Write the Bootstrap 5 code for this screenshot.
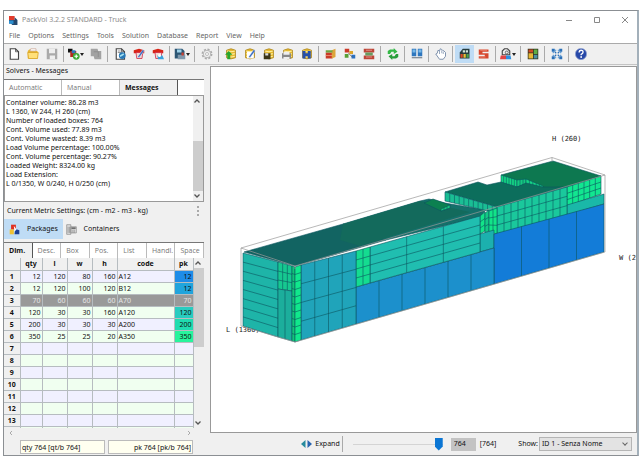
<!DOCTYPE html>
<html lang="en">
<head>
<meta charset="utf-8">
<meta name="viewport" content="width=device-width, initial-scale=1">
<title>PackVol 3.2.2 STANDARD - Truck</title>
<link href="https://cdn.jsdelivr.net/npm/bootstrap@5.3.0/dist/css/bootstrap.min.css" rel="stylesheet">
<style>
  body { font-family: "Noto Sans", "Open Sans", sans-serif; font-size: 7px; line-height: 12px; color: #111; background: #fff; padding: 10px 1px 3px 3px; }
  button, input, select, textarea { font: inherit; color: inherit; border-radius: 0; }
  .app-win { border: 1px solid #8b8f93; border-right: 2px solid #a3b0ba; background: #f0f0f0; }
  .titlebar { height: 18px; background: #fff; color: #8c8c8c; padding: 0 8px 0 5px; }
  .menubar { height: 14px; background: #fff; padding-left: 5px; gap: 8px; }
  .menubar a { color: #666; text-decoration: none; }
  .tools { height: 22px; border-top: 1px solid #aaa; border-bottom: 1px solid #c4c4c4; }
  .tool { width: 19px; height: 18px; padding: 0; border: 0; background: none; }
  .tool svg { width: 12px; height: 12px; }
  .tool.has-menu { width: 20px; }
  .tool.has-menu::after { content: ""; border: 2px solid transparent; border-top: 3px solid #222; border-bottom: 0; }
  .tool.is-on, .mode.is-on { background: #bfdcf5; }
  .tool-sep { width: 1px; height: 16px; margin: 0 2px; background: #aaa; }
  .side { width: 206px; }
  .side-inner { width: 200px; }
  .side-title { height: 14px; padding: 0 2px; }
  .settings-line { height: 17px; padding: 0 3px; }
  .modes { margin-bottom: 3px; }
  .tabline { border-top: 1px solid #777; background: #fff; }
  .tabline button { border: 0; border-right: 1px solid #bbb; background: #fff; color: #777; text-align: left; padding: 0 0 0 5px; font-family: "Open Sans", sans-serif; height: 15px; }
  .tabline button.is-on { color: #111; font-weight: 700; background: #f0f0f0; border-right-color: #555; }
  .msg-tabs button { width: 58px; }
  .dim-tabs button { width: 29px; }
  .log { height: 107px; border: 1px solid #999; background: #fff; }
  .log textarea { border: 0; outline: 0; resize: none; overflow: hidden; line-height: 9px; padding: 2px 1px 0 1px; background: #fff; }
  .sbar { width: 10px; background: #f0f0f0; }
  .sbar svg { width: 8px; height: 10px; }
  .mode { border: 0; background: none; height: 20px; width: 59px; padding: 0; gap: 7px; }
  .mode svg { width: 11px; height: 11px; }
  .gridbox { height: 170px; overflow: hidden; }
  .pk { table-layout: fixed; border-collapse: collapse; width: 189px; line-height: 11px; }
  .pk th, .pk td { height: 12px; padding: 0 1px; border-right: 1px solid #b6bcc0; border-bottom: 1px solid #b6bcc0; white-space: nowrap; }
  .pk th { background: #f0f0f0; text-align: center; font-weight: 700; }
  .pk td { text-align: right; background: #f0f0ff; }
  .pk tr:nth-child(even) td { background: #f0fff0; }
  .pk td:nth-child(6) { text-align: left; }
  .pk tr.sel td { background: #999; color: #e6e6e6; }
  .pk tr .c1 { background: #1e8ce8 !important; }
  .pk tr .c2 { background: #20a4dc !important; }
  .pk tr .c4 { background: #28ccc0 !important; }
  .pk tr .c5 { background: #20dcb0 !important; }
  .pk tr .c6 { background: #28f49c !important; }
  .sums { margin: 2px 11px 0 16px; gap: 3px; }
  .sum { height: 14px; border: 1px solid #bbb; background: #fffff0; padding: 0 1px; min-width: 0; }
  .view3d { background: #fff; border: 1px solid #999; margin-top: 1px; }
  .view3d svg { display: block; width: 100%; height: auto; }
  .view3d text { font: 7px "DejaVu Sans Mono", monospace; fill: #222; }
  .statusbar { height: 22px; padding-right: 5px; }
  .expand { border: 0; background: none; padding: 0; gap: 3px; }
  .slide { appearance: none; -webkit-appearance: none; width: 90px; height: 14px; margin: 0 8px; background: linear-gradient(#d4d4d4, #d4d4d4) center / 100% 1px no-repeat; }
  .slide::-webkit-slider-thumb { -webkit-appearance: none; width: 8px; height: 13px; background: #0b76d4; clip-path: polygon(0 0, 100% 0, 100% 70%, 50% 100%, 0 70%); }
  .count { width: 25px; height: 13px; border: 0; background: #c3c3c3; padding: 0 0 2px 3px; }
  .total { margin: 0 22px 0 4px; }
  .shown { width: 93px; height: 14px; border: 1px solid #b5b5b5; padding: 0 2px; appearance: none; -webkit-appearance: none; background: #e3e3e3; }
  .shown-wrap { margin-left: 1px; }
  .shown-wrap::after { content: ""; position: absolute; right: 5px; top: 4px; width: 4px; height: 4px; border: solid #666; border-width: 0 1px 1px 0; transform: rotate(45deg); }
</style>
</head>
<body>
<svg width="0" height="0" class="position-absolute" aria-hidden="true">
  <defs>
    <symbol id="db" viewBox="0 0 16 16"><path d="M2 3q6-4 12 0v10q-6 3-12 0z" fill="#e6b92e" stroke="#a98420"/><path d="M3 4q5 2 10 0M3 7.500q5 2 10 0M3 11q5 2 10 0" fill="none" stroke="#fff0a0" stroke-width="1.500"/></symbol>
    <symbol id="page" viewBox="0 0 16 16"><path d="M3 1h7l4 4v10H3z" fill="#fff" stroke="#444" stroke-width="1.500"/><path d="M10 1v4h4" fill="none" stroke="#444"/></symbol>
    <symbol id="truck" viewBox="0 0 16 16"><path d="M1 3l7-2 7 2v4H1z" fill="#d82418"/><path d="M4 6h9l-1 8H5z" fill="#f4d9d0" stroke="#c24"/></symbol>
    <symbol id="up" viewBox="0 0 8 10"><path d="M1.500 6.500L4 4l2.500 2.500" fill="none" stroke="#555" stroke-width="1.300"/></symbol>
    <symbol id="down" viewBox="0 0 8 10"><path d="M1.500 3.500L4 6l2.500-2.500" fill="none" stroke="#555" stroke-width="1.300"/></symbol>
  </defs>
</svg>

<main class="app-win">
  <header class="titlebar d-flex align-items-center">
    <svg width="9" height="9" viewBox="0 0 16 16"><path d="M0 0h10v8H0z" fill="#e13b2c"/><path d="M10 2l5 5v9H6L0 10V7h10z" fill="#24486e"/><path d="M0 8h8v6H0z" fill="#2d8fd0"/></svg>
    <span class="ms-1">PackVol 3.2.2 STANDARD - Truck</span>
    <svg class="ms-auto" width="64" height="8" viewBox="0 0 64 8" fill="none" stroke="#888"><path d="M1 4.500h6M29.500 1.500h5v5h-5zM57 1l6 6M63 1l-6 6"/></svg>
  </header>
  <nav class="menubar d-flex align-items-center" aria-label="Main menu">
    <a href="#">File</a><a href="#">Options</a><a href="#">Settings</a><a href="#">Tools</a><a href="#">Solution</a><a href="#">Database</a><a href="#">Report</a><a href="#">View</a><a href="#">Help</a>
  </nav>
  <div class="tools d-flex align-items-center" role="toolbar" aria-label="Tools" id="tools"></div>

  <div class="d-flex">
    <aside class="side flex-shrink-0">
      <div class="side-inner">
        <div class="side-title">Solvers - Messages</div>
        <div class="tabline msg-tabs d-flex"><button type="button">Automatic</button><button type="button">Manual</button><button type="button" class="is-on">Messages</button></div>
        <div class="log d-flex">
          <textarea class="flex-grow-1" readonly aria-label="Messages">Container volume: 86.28 m3
L 1360, W 244, H 260 (cm)
Number of loaded boxes: 764
Cont. Volume used: 77.89 m3
Cont. Volume wasted: 8.39 m3
Load Volume percentage: 100.00%
Cont. Volume percentage: 90.27%
Loaded Weight: 8324.00 kg
Load Extension:
L 0/1350, W 0/240, H 0/250 (cm)</textarea>
          <div class="sbar d-flex flex-column"><svg><use href="#up"/></svg><div style="flex:35"></div><div style="flex:50;background:#cdcdcd"></div><svg><use href="#down"/></svg></div>
        </div>
        <div class="settings-line d-flex align-items-center justify-content-between"><span class="text-nowrap">Current Metric Settings: (cm - m2 - m3 - kg)</span><svg width="4" height="10" viewBox="0 0 4 10" fill="#aaa"><path d="M0 0h2v2H0zM0 4h2v2H0zM0 8h2v2H0z"/></svg></div>
        <div class="modes d-flex">
          <button type="button" class="mode is-on d-flex align-items-center justify-content-center"><svg viewBox="0 0 16 16"><path d="M3 1h7v7H3z" fill="#e03020"/><path d="M9 7l6 2v6H8z" fill="#1c3f96"/><path d="M1 8h6v7H1z" fill="#f0c030"/><path d="M7 3l4 5-3 3z" fill="#fff"/></svg>Packages</button>
          <button type="button" class="mode d-flex align-items-center justify-content-center"><svg viewBox="0 0 16 16"><path d="M1 1h6v14H1zM7 4h8v9H7z" fill="#ddd" stroke="#888"/><path d="M8 5h6v2H8z" fill="#555"/><path d="M3 4v9M5 4v9M10 8v5M12 8v5" stroke="#888"/></svg>Containers</button>
        </div>
        <div class="tabline dim-tabs d-flex overflow-hidden"><button type="button" class="is-on">Dim.</button><button type="button">Desc.</button><button type="button">Box</button><button type="button">Pos.</button><button type="button">List</button><button type="button">Handl.</button><button type="button">Space</button></div>
        <div class="gridbox d-flex">
          <table class="pk">
            <colgroup><col style="width:16px"><col style="width:22px"><col style="width:25px"><col style="width:25px"><col style="width:25px"><col style="width:57px"><col style="width:19px"></colgroup>
            <thead><tr><th></th><th>qty</th><th>l</th><th>w</th><th>h</th><th>code</th><th>pk</th></tr></thead>
            <tbody id="rows"></tbody>
          </table>
          <div class="sbar d-flex flex-column"><svg><use href="#up"/></svg><div style="flex:77;background:#cdcdcd"></div><div style="flex:70"></div><svg><use href="#down"/></svg></div>
        </div>
        <div class="d-flex justify-content-between px-1 me-2"><svg width="6" height="10" viewBox="0 0 6 10" fill="none" stroke="#aaa"><path d="M4 3L2 5l2 2"/></svg><svg width="6" height="10" viewBox="0 0 6 10" fill="none" stroke="#aaa"><path d="M2 3l2 2-2 2"/></svg></div>
        <div class="sums d-flex"><input class="sum w-50" readonly aria-label="Quantity" value="qty 764 [qt/b 764]"><input class="sum w-50 text-end" readonly aria-label="Packed" value="pk 764 [pk/b 764]"></div>
      </div>
    </aside>

    <section class="flex-grow-1 overflow-hidden">
      <div class="view3d">
        <svg viewBox="211 67 425 365" role="img" aria-label="Loaded truck">
          <text x="226" y="332">L (1360)</text>
          <g id="scene" stroke="#0b5560" stroke-opacity=".75" stroke-width=".8" stroke-linejoin="round"></g>
          <path fill="none" stroke="#999" stroke-width=".7" d="M241 248L552 157.500 605 175V252L295 342 241 326zM241 248l54 18L605 175M295 266v3M552 157.500v4"/>
          <text x="552" y="141">H (260)</text><text x="619" y="260">W (2</text>
        </svg>
      </div>
      <div class="statusbar d-flex align-items-center justify-content-end">
        <button type="button" class="expand d-flex align-items-center"><svg width="11" height="8" viewBox="0 0 11 8"><path d="M4.500 0v8L0 4z" fill="#258a9d"/><path d="M6.500 0v8L11 4z" fill="#2764b0"/></svg>Expand</button>
        <span class="tool-sep"></span>
        <input type="range" class="slide" aria-label="Boxes shown" min="0" max="764" value="764">
        <input class="count" aria-label="Box number" value="764">
        <span class="total">[764]</span>
        <label for="shown">Show:</label>
        <div class="shown-wrap position-relative d-flex"><select id="shown" class="shown"><option>ID 1 - Senza Nome</option></select></div>
      </div>
    </section>
  </div>
</main>

<script src="https://cdn.jsdelivr.net/npm/bootstrap@5.3.0/dist/js/bootstrap.bundle.min.js"></script>
<script>
  // Toolbar: [label, drawing, modifier]; null is a separator
  const db = '<use href="#db"/>', page = '<use href="#page"/>', truck = '<use href="#truck"/>';
  const pen = '<path d="M6 12L13 2l2 2-7 9z" fill="#3d6fc4" stroke="#fff" stroke-width=".5"/>';
  const icons = [
    ['New', page],
    ['Open', '<path d="M1 4l2-2h4l1 2h6v10H1z" fill="#e7b52c"/><path d="M4 4h8V1H5z" fill="#fff" stroke="#ca9"/><path d="M1 6h14l-1 8H2z" fill="#ffe07a" stroke="#d6a020"/>'],
    ['Save', '<path d="M1 1h14v14H1z" fill="#aaa"/><path d="M4 1h8v6H4zM5 10h7v5H5z" fill="#eee"/>'], null,
    ['Add package', '<path d="M0 1h6v5H0z" fill="#111"/><path d="M3 4h8v8H3z" fill="#b5281c"/><path d="M5 3h5v4H5z" fill="#2c7abd"/><circle cx="11" cy="11" r="4.500" fill="#3cab35"/><path d="M11 8.500v5M8.500 11h5" stroke="#fff" stroke-width="1.500"/>', 'has-menu'],
    ['Copy', '<path d="M1 1h9l1 3h4v11H6l-1-4H1z" fill="#a2a2a2"/><path d="M5 5h6v7" fill="none" stroke="#888"/>'], null,
    ['Edit sheet', page + '<path d="M5 4h4M5 6h6" stroke="#777"/><circle cx="11" cy="10" r="4.500" fill="#2878b6"/><path d="M8 11l5-3" stroke="#a4e0ee" stroke-width="2"/>'],
    ['Edit truck', truck + pen],
    ['Truck loads', truck + '<path d="M7 10h7l2 5H8z" fill="#38a3de"/><circle cx="10" cy="10" r="2" fill="#fff"/>'], null,
    ['Save view', '<path d="M1 1h10l3 3v10H1z" fill="#2d5674"/><path d="M4 2h6v4H4z" fill="#9cd0e8"/><path d="M5 9h10v6H5z" fill="#7f98ac"/><path d="M10 6h3v4h-3z" fill="#c84030"/>', 'has-menu'], null,
    ['Options', '<circle cx="8" cy="8" r="6" fill="none" stroke="#aaa" stroke-width="2.500" stroke-dasharray="2.700 2"/><circle cx="8" cy="8" r="5" fill="#eee" stroke="#aaa"/><circle cx="8" cy="8" r="2" fill="#fff" stroke="#aaa"/>'], null,
    ['Database load', db + '<path d="M0 9l5-5 5 5H7v6H3V9z" fill="#28a52c"/>'],
    ['Database edit', db + '<path d="M4 5h9v9H4z" fill="#fff"/>' + pen],
    ['Database save', db + '<path d="M1 7h9v8H1z" fill="#3b3416"/><path d="M3 7h4v3H3z" fill="#ddd"/>'],
    ['Database print', db + '<path d="M0 7h12v7H0z" fill="#888"/><path d="M2 5h8v4H2zM2 12h8v3H2z" fill="#eee"/>'],
    ['Database find', db + '<path d="M2 14V4h4v3h3V4h4v10H9v-3H6v3z" fill="#2850a8"/>'], null,
    ['Load', '<path d="M1 6h9v8H1z" fill="#c93b28"/><path d="M9 3l5-2v11l-5 2z" fill="#dda43a"/><path d="M1 3h9v3H1z" fill="#6fa544"/><path d="M1 10h9" stroke="#f0a080"/>'],
    ['Groups', '<path d="M1 1h6v5H1z" fill="#cc3a28"/><path d="M7 4h5v4H7z" fill="#dba52b"/><path d="M1 8h5v5H1z" fill="#58a035"/><path d="M10 9h5v5h-5z" fill="#2d70c0"/><path d="M6 7l5 5" stroke="#555"/>'],
    ['Layers', '<path d="M1 1h14v5H1zM1 10h14v5H1z" fill="#bd4638"/><path d="M3 6h10v4H3z" fill="#699c60"/><path d="M4 3h8M4 12h8" stroke="#eda8a0"/>'], null,
    ['Refresh', '<path d="M1 8V4l3-2h5V0l5 5-5 3V5H6L4 8z" fill="#33b845"/><path d="M15 8v4l-3 2H7v2l-5-5 5-3v3h3l2-3z" fill="#289c3a"/>'], null,
    ['Windows', '<path d="M1 1h6v10H1zM9 1h6v10H9z" fill="#2e76bd"/><path d="M2 2h4v4H2zM10 2h4v4h-4z" fill="#76b8e8"/><path d="M1 13h14" stroke="#345"/>'], null,
    ['Pan', '<path d="M3 7l1-4 2 1 1-3 2 1 1 1 2 1 2 2v5l-3 4H6L1 8z" fill="#fff" stroke="#7d91ad" stroke-width="1.300"/><path d="M6 4v4M9 3v4M11 5v3" stroke="#7d91ad"/>'], null,
    ['3D view', '<path d="M1 6l4-5h9v13H1z" fill="#263b3c"/><path d="M2 8h3v5H2z" fill="#d84a25"/><path d="M6 8h3v5H6z" fill="#eec034"/><path d="M10 8h3v5h-3z" fill="#49a348"/><path d="M5 3h3v3H5zM9 3h3v3H9z" fill="#cfe4d6"/>', 'is-on'],
    ['Section', '<path d="M1 2h13v3H6v2h8v7H1v-3h8V9H1z" fill="#d6482f"/><path d="M2 12h8M3 3h9" stroke="#f0907c"/>'], null,
    ['View options', '<path d="M3 9V4l3-3h4l3 3v5z" fill="#eee" stroke="#444" stroke-width="1.500"/><circle cx="9" cy="6" r="2" fill="none" stroke="#444"/><path d="M1 10h7v5H0z" fill="#e34545"/><path d="M8 10h6l1 5H8z" fill="#2f8fe0"/>', 'has-menu'], null,
    ['Colors', '<path d="M1 1h14v14H1z" fill="#33351c"/><path d="M2 2h6v4H2z" fill="#d04a25"/><path d="M9 2h5v6H9z" fill="#5fae44"/><path d="M2 7h6v7H2z" fill="#e9b734"/><path d="M9 9h5v5H9z" fill="#4c92a4"/>'], null,
    ['Fit', '<path d="M1 1h4v4H1zM11 1h4v4h-4zM1 11h4v4H1zM11 11h4v4h-4z" fill="#2b70b8"/><path d="M5 3h6M5 13h6M3 5v6M13 5v6" stroke="#4a90d0" stroke-width="1.500" stroke-dasharray="2 2"/><path d="M5 5l2 2M11 5L9 7M5 11l2-2M11 11L9 9" stroke="#2b70b8" stroke-width="1.500"/>'], null,
    ['Help', '<circle cx="8" cy="8" r="7.500" fill="#2748a8" stroke="#8d9fcd"/><path d="M5.500 6q0-3 2.700-3t2.500 2.500q0 1.500-2.500 3v1" fill="none" stroke="#fff" stroke-width="1.800"/><circle cx="8.200" cy="12" r="1.200" fill="#fff"/>']
  ];
  document.getElementById('tools').innerHTML = icons.map(i => i
    ? `<button type="button" class="tool d-flex align-items-center justify-content-center flex-shrink-0 ${i[2] || ''}" aria-label="${i[0]}"><svg viewBox="0 0 16 16">${i[1]}</svg></button>`
    : '<span class="tool-sep flex-shrink-0"></span>').join('');

  const data = [[12,120,80,160,'A12',12],[12,120,100,120,'B12',12],[70,60,60,60,'A70',70],[120,30,30,160,'A120',120],[200,30,30,30,'A200',200],[350,25,25,20,'A350',350]];
  let html = '';
  for (let r = 1; r <= 14; r++) {
    const d = data[r - 1] || ['', '', '', '', '', ''];
    html += `<tr class="${r === 3 ? 'sel' : ''}"><th scope="row">${r}</th>` + d.map((v, i) => `<td${i === 5 && r < 7 ? ` class="c${r}"` : ''}>${v}</td>`).join('') + '</tr>';
  }
  document.getElementById('rows').innerHTML = html;

  // Cargo: each face is a quad with vertical sides, split into columns and rows
  let out = '';
  const poly = (pts, fill, extra = '') => { out += `<polygon points="${pts}" fill="${fill}" ${extra}/>`; };
  function face(x0, t0, b0, x1, t1, b1, cols, rows, fill) {
    poly(`${x0},${t0} ${x1},${t1} ${x1},${b1} ${x0},${b0}`, fill);
    let d = '';
    for (let i = 1; i < cols; i++) { const k = i / cols, x = x0 + (x1 - x0) * k; d += `M${x} ${t0 + (t1 - t0) * k}V${b0 + (b1 - b0) * k}`; }
    for (let j = 1; j < rows; j++) { const k = j / rows; d += `M${x0} ${t0 + (b0 - t0) * k}L${x1} ${t1 + (b1 - t1) * k}`; }
    out += `<path d="${d}" fill="none"/>`;
  }
  // long deck
  poly('244,252 343,224 386,240 295,266', '#126462');
  poly('343,224 420,201 429,199 445,203 486,210 480,217 386,240', '#14706a');
  poly('343,224 420,201 470,212 360,246 340,240', '#136a5c', 'stroke="none"');
  poly('424,203 433,199 450,205 448,209 441,211', '#0c8050');
  face(441, 209, 211, 450, 205, 208, 3, 1, '#16c87c');
  // rear block
  poly('501,175 553,161 601,176 567,187 545,188 530,181 518,187', '#0d7850');
  face(501, 175, 183, 517, 180, 187, 6, 1, '#14d484');
  face(517, 180, 187, 526, 179, 184, 3, 1, '#14c880');
  face(526, 179, 184, 543, 186, 189, 5, 1, '#14d484');
  // middle block
  poly('445,192 478,182 487,185 501,182 517,187 526,183 543,187 567,187 497,207', '#0c6e5c');
  face(445, 192, 201, 497, 207, 213, 11, 1, '#1abe94');
  face(567, 187, 206, 601, 176, 194, 6, 3, '#12e690');
  face(567, 205, 215, 604, 194, 204, 1, 1, '#1ab8a8');
  face(497, 207, 234, 567, 187, 215, 10, 3, '#1ac89c');
  face(480, 216, 234, 485, 212, 231, 1, 3, '#12e488');
  face(485, 213, 233, 489, 210, 231, 1, 3, '#14c886');
  face(489, 211, 232, 497, 208, 234, 2, 3, '#12e488');
  face(480, 234, 252, 494, 230, 248, 1, 1, '#1cb0ae');
  // side wall
  face(494, 234, 284, 604, 204, 252, 4, 1, '#137cd8');
  face(356, 287, 324, 494, 248, 284, 6, 1, '#1c90cc');
  face(370, 247, 283, 480, 216, 252, 3, 4, '#20beb0');
  face(356, 251, 287, 370, 247, 283, 2, 4, '#14dc90');
  face(301, 265, 340, 356, 251, 324, 4, 4, '#20a4ba');
  // rear end
  face(243, 253, 326, 278, 262, 337, 1, 8, '#1eb4a8');
  face(278, 262, 289, 292, 266, 291, 3, 3, '#16c890');
  face(278, 289, 337, 292, 291, 341, 2, 1, '#1cae9c');
  face(292, 266, 341, 295, 267, 342, 1, 10, '#12c478');
  face(295, 267, 342, 301, 265, 340, 1, 10, '#10e88c');
  document.getElementById('scene').innerHTML = out;
</script>
</body>
</html>
